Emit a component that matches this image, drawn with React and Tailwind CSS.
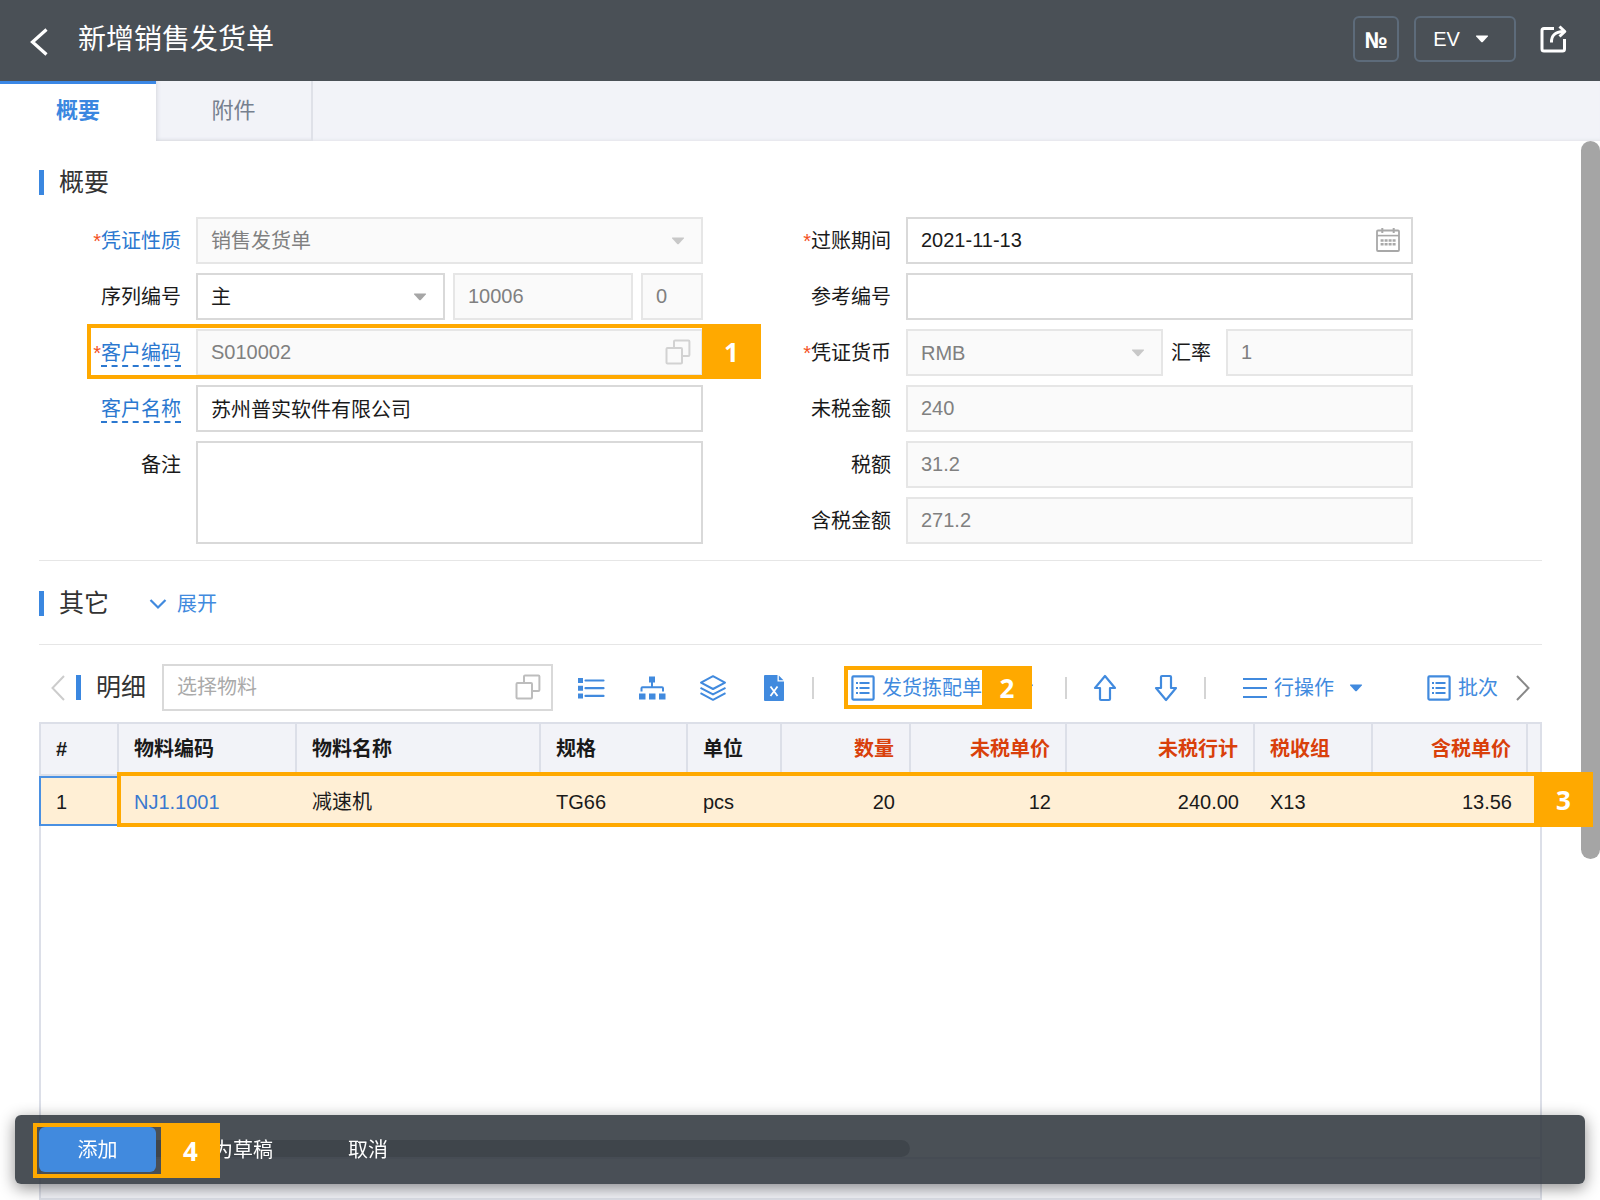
import clsx from 'clsx'

const COLUMNS = [
  { key: 'no', label: '#', width: 80 },
  { key: 'code', label: '物料编码', width: 178 },
  { key: 'name', label: '物料名称', width: 244 },
  { key: 'spec', label: '规格', width: 147 },
  { key: 'unit', label: '单位', width: 94 },
  { key: 'qty', label: '数量', width: 129, right: true, red: true },
  { key: 'price', label: '未税单价', width: 156, right: true, red: true },
  { key: 'total', label: '未税行计', width: 188, right: true, red: true },
  { key: 'tax', label: '税收组', width: 118, red: true },
  { key: 'gross', label: '含税单价', width: 155, right: true, red: true },
  { key: 'end', label: '', width: 14 },
]

const ROWS = [
  {
    no: '1',
    code: 'NJ1.1001',
    name: '减速机',
    spec: 'TG66',
    unit: 'pcs',
    qty: '20',
    price: '12',
    total: '240.00',
    tax: 'X13',
    gross: '13.56',
  },
]

const TOTAL_WIDTH = COLUMNS.reduce((sum, c) => sum + c.width, 0)

/* ---------- icons ---------- */

function Caret({ className }) {
  return (
    <svg viewBox="0 0 14 8" className={clsx('h-2 w-3.5 shrink-0', className)} fill="currentColor" aria-hidden="true">
      <path d="M1.5 .5h11q1 0 .3.9L7.8 6.9q-.8.8-1.6 0L1.2 1.4Q.5.5 1.5.5Z" />
    </svg>
  )
}

function CopyIcon({ className }) {
  return (
    <svg viewBox="0 0 26 26" className={clsx('h-[26px] w-[26px]', className)} fill="none" stroke="currentColor" strokeWidth="2" aria-hidden="true">
      <rect x="1.5" y="9" width="15.5" height="15.5" rx="1" />
      <path d="M9 8.5V2.6q0-1 1-1h13.4q1 0 1 1V16q0 1-1 1H17.5" />
    </svg>
  )
}

function CalendarIcon({ className }) {
  return (
    <svg viewBox="0 0 26 26" className={clsx('h-[26px] w-[26px]', className)} fill="none" stroke="currentColor" aria-hidden="true">
      <rect x="2" y="3.5" width="22" height="20.5" rx="1" strokeWidth="1.8" />
      <path d="M2 8.6h22" strokeWidth="1.6" />
      <path d="M7.3 1v5M18.7 1v5" strokeWidth="2" />
      <path d="M5.6 13.5h15M5.6 17.3h15" strokeWidth="2.4" strokeDasharray="3 1" />
    </svg>
  )
}

function FormIcon() {
  return (
    <svg viewBox="0 0 24 26" className="h-[26px] w-6 shrink-0" fill="none" stroke="currentColor" aria-hidden="true">
      <rect x="1.4" y="1.4" width="21.2" height="23.2" rx="1" strokeWidth="2.2" />
      <path d="M8.5 8h10M8.5 13h10M8.5 18h10" strokeWidth="1.8" />
      <path d="M5 8h2M5 13h2M5 18h2" strokeWidth="1.8" />
    </svg>
  )
}

function ListIcon() {
  return (
    <svg viewBox="0 0 28 28" className="h-7 w-7" aria-hidden="true">
      <path d="M1 4h5v5H1zM1 11.7h5v5H1zM1 19.4h5v5H1z" fill="currentColor" />
      <path d="M8.5 6.5h18M8.5 14.2h18M8.5 21.9h18" stroke="currentColor" strokeWidth="2.2" strokeLinecap="round" />
    </svg>
  )
}

function TreeIcon() {
  return (
    <svg viewBox="0 0 28 28" className="h-7 w-7" aria-hidden="true">
      <path d="M11 2.5h6v6h-6zM1 19.5h6.500v6H1zM11 19.500h6.500v6H11zM21 19.500h6.500v6H21z" fill="currentColor" />
      <path d="M14 8v5.500M3.500 17.500v-3.200q0-1 1-1h19.500q1 0 1 1v3.200" fill="none" stroke="currentColor" strokeWidth="2" />
    </svg>
  )
}

function LayersIcon() {
  return (
    <svg viewBox="0 0 28 28" className="h-7 w-7" fill="none" stroke="currentColor" strokeWidth="2" strokeLinejoin="round" aria-hidden="true">
      <path d="M14 2.200 26 8.600 14 15 2 8.600Z" />
      <path d="M1.500 13.800 14 20.400l12.500-6.600M1.500 19.200 14 25.800l12.500-6.600" />
    </svg>
  )
}

function ExcelIcon() {
  return (
    <svg viewBox="0 0 28 28" className="h-7 w-7" aria-hidden="true">
      <path d="M5 1h12.500v6.500h6.500V26q0 1-1 1H5q-1 0-1-1V2q0-1 1-1Z" fill="currentColor" />
      <path d="M18.800 1.500 23.500 6.200h-4.700Z" fill="currentColor" />
      <path d="m10.500 12.500 7 9.500m0-9.500-7 9.500" stroke="#fff" strokeWidth="1.8" />
    </svg>
  )
}

function ArrowIcon({ down }) {
  return (
    <svg viewBox="0 0 28 28" className={clsx('h-7 w-7', down && 'rotate-180')} fill="none" stroke="currentColor" strokeWidth="2.2" strokeLinejoin="round" aria-hidden="true">
      <path d="M14 2 24 14h-5v11q0 1-1 1h-8q-1 0-1-1V14H4Z" />
    </svg>
  )
}

/* ---------- small parts ---------- */

// Numbered orange frame that points out a step
function Step({ n, className, badgeClass = 'w-[59px]' }) {
  return (
    <div className={clsx('pointer-events-none absolute z-10 flex', className)}>
      <div className="flex-1 border-4 border-r-0 border-[#ffa900]" />
      <div
        className={clsx(
          "flex items-center justify-center bg-[#ffa900] font-['Open_Sans',sans-serif] text-[26px] leading-none font-bold text-white",
          badgeClass
        )}
      >
        {n}
      </div>
    </div>
  )
}

function Title({ children }) {
  return (
    <h2 className="flex h-[25px] items-center gap-[15px] text-[25px] leading-none whitespace-nowrap text-[#333]">
      <span className="h-[25px] w-[5px] bg-[#3a87e0]" />
      {children}
    </h2>
  )
}

function Field({ id, label, required, link, dashed, tall, children }) {
  return (
    <div className="relative flex gap-[15px]">
      <label
        htmlFor={id}
        className={clsx(
          'flex h-[47px] w-[142px] shrink-0 items-center justify-end',
          link ? 'text-[#2b78d0]' : 'text-[#1a1a1a]'
        )}
      >
        {required && <span className="text-[#f4511e]">*</span>}
        <span className={clsx('leading-6', dashed && 'border-b-2 border-dashed border-[#2b78d0] pt-0.5')}>{label}</span>
      </label>
      <div className={clsx('flex min-w-0 flex-1 gap-2', tall ? 'h-[103px]' : 'h-[47px]')}>{children}</div>
    </div>
  )
}

function TextBox({ id, value = '', locked, className, icon, ...rest }) {
  return (
    <div className={clsx('relative h-full min-w-0', className)}>
      <input
        id={id}
        type="text"
        defaultValue={value}
        readOnly={locked}
        className={clsx(
          'h-full w-full border-2 px-[13px] outline-none placeholder:text-[#aaa]',
          locked ? 'border-[#e6e6e6] bg-[#fafafa] text-[#808080]' : 'border-[#d9d9d9] bg-white text-[#1a1a1a]'
        )}
        {...rest}
      />
      {icon}
    </div>
  )
}

function SelectBox({ id, value, locked, className }) {
  return (
    <div className={clsx('relative h-full min-w-0', className)}>
      <select
        id={id}
        disabled={locked}
        className={clsx(
          'h-full w-full appearance-none border-2 px-[13px] opacity-100 outline-none',
          locked ? 'border-[#e6e6e6] bg-[#fafafa] text-[#808080]' : 'border-[#d9d9d9] bg-white text-[#1a1a1a]'
        )}
      >
        <option>{value}</option>
      </select>
      <Caret className={clsx('absolute top-5 right-[18px]', locked ? 'text-[#c8c8c8]' : 'text-[#a6a6a6]')} />
    </div>
  )
}

function Divider({ className }) {
  return <span className={clsx('h-[22px] w-0.5 shrink-0 bg-[#d4d4d4]', className)} />
}

/* ---------- page sections ---------- */

function Header() {
  return (
    <header className="flex h-[81px] items-center bg-[#4a5056] pr-[33px] pb-1 pl-[30px] text-white">
      <button type="button" aria-label="返回" className="mt-1.5">
        <svg viewBox="0 0 18 28" className="h-7 w-[18px]" fill="none" stroke="currentColor" strokeWidth="3.2" aria-hidden="true">
          <path d="M16.500 1.500 2.500 14l14 12.500" />
        </svg>
      </button>
      <h1 className="mt-0.5 ml-[30px] text-[28px] leading-none">新增销售发货单</h1>
      <button
        type="button"
        className="ml-auto h-[46px] w-[46px] rounded-md border-2 border-[#5d6b7a] font-['Open_Sans',sans-serif] text-[22px] leading-none font-bold"
      >
        №
      </button>
      <button
        type="button"
        className="ml-[15px] flex h-[46px] w-[102px] items-center justify-center gap-[15px] rounded-md border-2 border-[#5d6b7a] pr-2"
      >
        EV
        <Caret />
      </button>
      <button type="button" aria-label="分享" className="ml-[23px]">
        <svg viewBox="0 0 28 28" className="h-7 w-7" fill="none" stroke="currentColor" strokeWidth="3" strokeLinejoin="round" aria-hidden="true">
          <path d="M15 3.500H5q-2 0-2 2V24q0 2 2 2h18.500q2 0 2-2V14" />
          <path d="M12.500 17.500q-.5-10.500 12-11" />
          <path d="M20.500 1.500 25.800 6.500l-5.300 5" />
        </svg>
      </button>
    </header>
  )
}

function Tabs() {
  return (
    <nav role="tablist" className="flex h-[60px] bg-[#f2f3f8] text-[22px] shadow-[inset_0_-3px_3px_-2px_#e3e4ea]">
      <button
        type="button"
        role="tab"
        aria-selected="true"
        className="w-[156px] border-t-3 border-[#3a87e5] bg-white pb-[3px] font-bold text-[#3a87e0]"
      >
        概要
      </button>
      <button
        type="button"
        role="tab"
        aria-selected="false"
        className="w-[157px] border-r-2 border-[#dfe1e8] text-[#76808f] shadow-[inset_4px_-3px_4px_-3px_#d5d7de]"
      >
        附件
      </button>
    </nav>
  )
}

function SummaryForm() {
  return (
    <form className="mt-[22px] grid grid-cols-2 gap-x-[46px] pr-[129px]">
      <div className="flex flex-col gap-[9px]">
        <Field id="nature" label="凭证性质" required link>
          <SelectBox id="nature" value="销售发货单" locked className="flex-1" />
        </Field>
        <Field id="series" label="序列编号">
          <SelectBox id="series" value="主" className="flex-1" />
          <TextBox value="10006" locked className="w-[180px]" aria-label="编号" />
          <TextBox value="0" locked className="w-[62px]" aria-label="版本" />
        </Field>
        <div className="relative">
          <Field id="customer" label="客户编码" required link dashed>
            <TextBox
              id="customer"
              value="S010002"
              locked
              className="flex-1"
              icon={<CopyIcon className="absolute top-2.5 right-3 text-[#d2d2d2]" />}
            />
          </Field>
          <Step n={1} className="-top-[5px] -right-[58px] -bottom-[3px] left-12" />
        </div>
        <Field id="customer-name" label="客户名称" link dashed>
          <TextBox id="customer-name" value="苏州普实软件有限公司" className="flex-1" />
        </Field>
        <Field id="remark" label="备注" tall>
          <textarea id="remark" className="h-full flex-1 resize-none border-2 border-[#d9d9d9] px-[13px] py-2 outline-none" />
        </Field>
      </div>

      <div className="flex flex-col gap-[9px]">
        <Field id="date" label="过账期间" required>
          <TextBox
            id="date"
            value="2021-11-13"
            className="flex-1"
            icon={<CalendarIcon className="absolute top-2.5 right-3 text-[#a8a8a8]" />}
          />
        </Field>
        <Field id="ref" label="参考编号">
          <TextBox id="ref" className="flex-1" />
        </Field>
        <Field id="currency" label="凭证货币" required>
          <SelectBox id="currency" value="RMB" locked className="flex-1" />
          <label htmlFor="rate" className="flex w-[47px] items-center text-[#1a1a1a]">
            汇率
          </label>
          <TextBox id="rate" value="1" locked className="w-[187px]" />
        </Field>
        <Field id="net" label="未税金额">
          <TextBox id="net" value="240" locked className="flex-1" />
        </Field>
        <Field id="tax" label="税额">
          <TextBox id="tax" value="31.2" locked className="flex-1" />
        </Field>
        <Field id="gross" label="含税金额">
          <TextBox id="gross" value="271.2" locked className="flex-1" />
        </Field>
      </div>
    </form>
  )
}

function Toolbar() {
  return (
    <div className="mt-[19px] flex h-[47px] items-center pr-3 pl-3 whitespace-nowrap text-[#418ade]">
      <button type="button" aria-label="向左" className="mr-[11px] text-[#ccc]">
        <svg viewBox="0 0 14 26" className="h-[26px] w-3.5" fill="none" stroke="currentColor" strokeWidth="2" aria-hidden="true">
          <path d="M13 1 1.500 13 13 25" />
        </svg>
      </button>
      <Title>明细</Title>
      <TextBox
        className="ml-4 flex-1"
        placeholder="选择物料"
        aria-label="选择物料"
        icon={<CopyIcon className="absolute top-2.5 right-3 text-[#bdbdbd]" />}
      />
      <div className="ml-6 flex gap-[33px]">
        <button type="button" aria-label="列表"><ListIcon /></button>
        <button type="button" aria-label="层级"><TreeIcon /></button>
        <button type="button" aria-label="图层"><LayersIcon /></button>
        <button type="button" aria-label="导出 Excel"><ExcelIcon /></button>
      </div>
      <Divider className="ml-6" />
      <div className="relative ml-[30px] h-[43px] w-[188px]">
        <button type="button" className="flex h-full items-center pl-[7px]">
          <FormIcon />
          <span className="ml-[7px]">发货拣配单</span>
          <Caret className="ml-[38px]" />
        </button>
        <Step n={2} className="inset-0" badgeClass="w-[50px]" />
      </div>
      <Divider className="ml-[33px]" />
      <div className="ml-6 flex gap-[33px]">
        <button type="button" aria-label="上移"><ArrowIcon /></button>
        <button type="button" aria-label="下移"><ArrowIcon down /></button>
      </div>
      <Divider className="ml-6" />
      <button type="button" className="ml-[37px] flex items-center">
        <svg viewBox="0 0 24 24" className="h-6 w-6" stroke="currentColor" strokeWidth="2.200" aria-hidden="true">
          <path d="M0 3h24M0 12h24M0 21h24" />
        </svg>
        <span className="mr-[15px] ml-[7px]">行操作</span>
        <Caret />
      </button>
      <button type="button" className="ml-16 flex items-center">
        <FormIcon />
        <span className="ml-[7px]">批次</span>
      </button>
      <button type="button" aria-label="向右" className="ml-[18px] text-[#888]">
        <svg viewBox="0 0 14 26" className="h-[26px] w-3.5" fill="none" stroke="currentColor" strokeWidth="2" aria-hidden="true">
          <path d="m1 1 11.500 12L1 25" />
        </svg>
      </button>
    </div>
  )
}

function ItemTable() {
  return (
    <div className="relative mt-[11px] flex flex-1 flex-col border-2 border-t-0 border-[#dcdfe8]">
      <div className="relative -mx-0.5">
        <table className="w-full table-fixed border-separate border-spacing-0">
          <colgroup>
            {COLUMNS.map((c) => (
              <col key={c.key} style={{ width: `${(c.width / TOTAL_WIDTH) * 100}%` }} />
            ))}
          </colgroup>
          <thead>
            <tr className="h-[54px] bg-[#f2f3f8]">
              {COLUMNS.map((c) => (
                <th
                  key={c.key}
                  className={clsx(
                    'border-y-2 border-r-2 border-[#dcdfe8] px-[15px] font-bold first:border-l-2 last:p-0',
                    c.right ? 'text-right' : 'text-left',
                    c.red ? 'text-[#d9400b]' : 'text-[#1a1a1a]'
                  )}
                >
                  {c.label}
                </th>
              ))}
            </tr>
          </thead>
          <tbody>
            {ROWS.map((row) => (
              <tr key={row.no} className="h-[50px] bg-[#ffefd5] text-[#1a1a1a]">
                {COLUMNS.map((c) => (
                  <td
                    key={c.key}
                    className={clsx(
                      'pt-0.5 pr-4 pl-[15px] last:p-0',
                      c.right && 'text-right',
                      c.key === 'no' && 'border-2 border-[#4a90e2]'
                    )}
                  >
                    {c.key === 'code' ? (
                      <a href="#item" className="text-[#3a78cf]">{row.code}</a>
                    ) : (
                      row[c.key]
                    )}
                  </td>
                ))}
              </tr>
            ))}
          </tbody>
        </table>
        <Step n={3} className="top-[50px] -right-[51px] left-[78px] h-[55px]" />
      </div>
      <div className="mt-auto h-[17px] w-[58%] rounded-full bg-[#a5a5a5]" />
      <div className="h-[41px] border-t-2 border-[#dcdfe8] bg-[#f2f3f8]" />
    </div>
  )
}

function ActionBar() {
  return (
    <footer className="fixed right-[15px] bottom-4 left-[15px] z-20 flex h-[69px] items-center rounded-md bg-[rgba(49,56,63,0.88)] pl-6 text-white shadow-[0_4px_16px_rgba(0,0,0,0.45)]">
      <button type="button" className="h-[45px] w-[117px] rounded-md bg-[#418ade]">
        添加
      </button>
      <button type="button" aria-label="存为草稿" className="pr-[37px] pl-[57px]">为草稿</button>
      <button type="button" className="px-[38px]">取消</button>
      <Step n={4} className="top-2 left-[18px] h-[55px] w-[187px]" />
    </footer>
  )
}

export default function App() {
  return (
    <div className="flex min-h-screen flex-col bg-white font-['Liberation_Sans','Noto_Sans_CJK_SC',sans-serif] text-[20px] leading-6">
      <Header />
      <Tabs />
      <div className="flex flex-1">
        <main className="flex min-w-0 flex-1 flex-col px-[39px] pt-[29px]">
          <Title>概要</Title>
          <SummaryForm />
          <hr className="mt-4 border-[#e6e6e6]" />

          <div className="mt-[30px] flex items-center">
            <Title>其它</Title>
            <button type="button" className="ml-10 flex items-center gap-2.5 text-[#418ade]">
              <svg viewBox="0 0 18 12" className="h-3 w-[18px]" fill="none" stroke="currentColor" strokeWidth="2.200" aria-hidden="true">
                <path d="m1.500 2 7.500 7.500L16.500 2" />
              </svg>
              展开
            </button>
          </div>
          <hr className="mt-7 border-[#e6e6e6]" />

          <Toolbar />
          <ItemTable />
        </main>
        <div className="w-[19px]">
          <div className="h-[718px] rounded-full bg-[#a5a5a5]" />
        </div>
      </div>
      <ActionBar />
    </div>
  )
}
